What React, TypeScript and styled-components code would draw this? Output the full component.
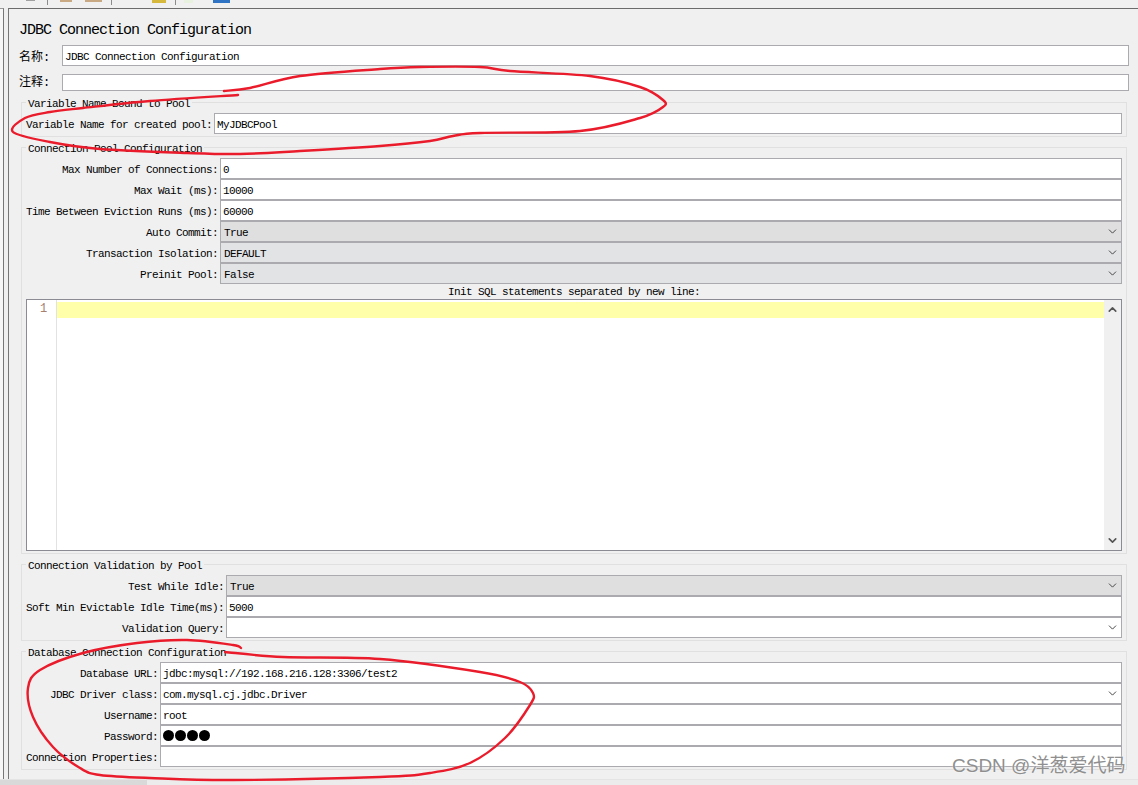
import React from 'react';
import styled, { createGlobalStyle } from 'styled-components';
import { ChevronDown, ChevronUp } from 'lucide-react';

const GlobalStyle = createGlobalStyle`
  html, body {
    margin: 0;
    padding: 0;
    background: #f0f0f0;
  }
  * {
    box-sizing: border-box;
  }
`;

const MONO = `"Liberation Mono", "Noto Sans CJK SC", monospace`;

const Page = styled.div`
  position: relative;
  width: 1138px;
  height: 785px;
  overflow: hidden;
  display: flex;
  flex-direction: column;
  background: #f0f0f0;
  font-family: ${MONO};
  font-size: 11px;
  letter-spacing: -0.6px;
  color: #000;
`;

const Toolbar = styled.div`
  height: 8px;
  flex: none;
  display: flex;
  align-items: flex-start;
  overflow: hidden;
`;

const ToolBit = styled.span<{ $left: number; $width: number; $height: number; $color: string }>`
  flex: none;
  margin-left: ${(p) => p.$left}px;
  width: ${(p) => p.$width}px;
  height: ${(p) => p.$height}px;
  background: ${(p) => p.$color};
`;

const ToolSep = styled.span<{ $left: number }>`
  flex: none;
  margin-left: ${(p) => p.$left}px;
  width: 1px;
  height: 5px;
  background: #8c8c8c;
`;

const Main = styled.div`
  flex: 1;
  min-height: 0;
  display: flex;
`;

const TreeEdge = styled.div`
  flex: none;
  width: 4px;
  border-right: 1px solid #777;
  border-top: 1px solid #9a9a9a;
  background: #f7f7f7;
`;

const Splitter = styled.div`
  flex: none;
  width: 4px;
`;

const Panel = styled.div`
  flex: 1;
  min-width: 0;
  border-left: 1px solid #777;
  border-top: 1px solid #6b6b6b;
  padding: 12px 9px 0 10px;
`;

const Title = styled.div`
  font-size: 15px;
  letter-spacing: -1px;
  line-height: 16px;
  height: 24px;
  padding-top: 2px;
`;

const NameRow = styled.div<{ $height: number; $gapBelow: number }>`
  display: flex;
  align-items: center;
  gap: 0;
  height: ${(p) => p.$height}px;
  margin-bottom: ${(p) => p.$gapBelow}px;
`;

const NameLabel = styled.span<{ $raise?: number }>`
  flex: none;
  width: 43px;
  padding-bottom: ${(p) => p.$raise || 0}px;
  font-size: 12px;
  letter-spacing: 0;
`;

const Field = styled.div<{ $tone?: 'white' | 'dark' | 'light' }>`
  flex: 1;
  min-width: 0;
  height: 100%;
  min-height: 17px;
  display: flex;
  align-items: center;
  justify-content: space-between;
  padding: 2px 2px 0 ${(p) => (p.$tone && p.$tone !== 'white' ? 3 : 2)}px;
  border: 1px solid #ababaf;
  white-space: pre;
  background: ${(p) =>
    p.$tone === 'dark' ? '#dfdfdf' : p.$tone === 'light' ? '#e2e3e5' : '#fff'};
`;

const Arrow = styled(ChevronDown)`
  flex: none;
  margin-top: -2px;
  color: #444;
  stroke-width: 1.8;
`;

const Group = styled.fieldset<{ $gapBelow: number }>`
  margin: 0 2px ${(p) => p.$gapBelow}px 2px;
  min-width: 0;
  padding: 3px 4px 2px 4px;
  border: 1px solid #e0e0e0;
`;

const GroupTitle = styled.legend`
  padding: 4px 2px 0 2px;
  line-height: 12px;
`;

const FieldGrid = styled.div`
  display: grid;
  grid-template-columns: max-content 1fr;
  grid-auto-rows: 21px;
  column-gap: 2px;
`;

const FieldLabel = styled.div`
  display: flex;
  align-items: center;
  justify-content: flex-end;
  padding-top: 2px;
  white-space: pre;
`;

const Caption = styled.div`
  height: 15px;
  padding-top: 2px;
  line-height: 13px;
  text-align: center;
`;

const Editor = styled.div`
  height: 252px;
  display: flex;
  border: 1px solid #8b8b94;
  background: #fff;
`;

const Gutter = styled.div`
  flex: none;
  width: 30px;
  padding: 2px 0 0 13px;
  border-right: 1px solid #e2e2e2;
  font-size: 12px;
  line-height: 15px;
  color: #a5806f;
`;

const CodeArea = styled.div`
  flex: 1;
  padding-top: 2px;
`;

const CurrentLine = styled.div`
  height: 16px;
  background: #ffffaa;
`;

const ScrollTrack = styled.div`
  flex: none;
  width: 17px;
  display: flex;
  flex-direction: column;
  align-items: center;
  justify-content: space-between;
  padding: 3px 0;
  background: #f0f0f0;
  color: #555;
`;

const Dots = styled.span`
  display: flex;
  gap: 1px;
  margin-top: -2px;
`;

const Dot = styled.span`
  width: 11px;
  height: 11px;
  border-radius: 50%;
  background: #000;
`;

const BottomStrip = styled.div`
  flex: none;
  height: 6px;
  display: flex;
  border-top: 1px solid #e4e4e4;
`;

const StripPart = styled.div<{ $grow?: boolean; $color: string }>`
  flex: ${(p) => (p.$grow ? 1 : 'none')};
  width: ${(p) => (p.$grow ? 'auto' : '147px')};
  background: ${(p) => p.$color};
`;

const Ink = styled.svg`
  position: absolute;
  inset: 0;
  pointer-events: none;
`;

const InkLine = styled.path`
  fill: none;
  stroke: #ea1c2c;
  stroke-width: 2.4;
  stroke-linecap: round;
  stroke-linejoin: round;
`;

const Watermark = styled.div`
  position: absolute;
  left: 952px;
  top: 754px;
  font-family: "Liberation Sans", "Noto Sans CJK SC", sans-serif;
  font-size: 19px;
  letter-spacing: 0;
  line-height: 24px;
  white-space: nowrap;
  color: #8f8f8f;
  text-shadow: 0 0 2px rgba(255, 255, 255, 0.9);
`;

type Row = {
  label: string;
  value?: string;
  tone?: 'white' | 'dark' | 'light';
  select?: boolean;
  secret?: boolean;
};

const Rows: React.FC<{ rows: Row[] }> = ({ rows }) => (
  <FieldGrid>
    {rows.map((row) => (
      <React.Fragment key={row.label}>
        <FieldLabel>{row.label}</FieldLabel>
        <Field $tone={row.tone}>
          {row.secret ? (
            <Dots>
              <Dot />
              <Dot />
              <Dot />
              <Dot />
            </Dots>
          ) : (
            <span>{row.value}</span>
          )}
          {row.select && <Arrow size={13} />}
        </Field>
      </React.Fragment>
    ))}
  </FieldGrid>
);

const poolRows: Row[] = [
  { label: 'Max Number of Connections:', value: '0' },
  { label: 'Max Wait (ms):', value: '10000' },
  { label: 'Time Between Eviction Runs (ms):', value: '60000' },
  { label: 'Auto Commit:', value: 'True', tone: 'dark', select: true },
  { label: 'Transaction Isolation:', value: 'DEFAULT', tone: 'light', select: true },
  { label: 'Preinit Pool:', value: 'False', tone: 'light', select: true },
];

const validationRows: Row[] = [
  { label: 'Test While Idle:', value: 'True', tone: 'dark', select: true },
  { label: 'Soft Min Evictable Idle Time(ms):', value: '5000' },
  { label: 'Validation Query:', select: true },
];

const databaseRows: Row[] = [
  { label: 'Database URL:', value: 'jdbc:mysql://192.168.216.128:3306/test2' },
  { label: 'JDBC Driver class:', value: 'com.mysql.cj.jdbc.Driver', select: true },
  { label: 'Username:', value: 'root' },
  { label: 'Password:', secret: true },
  { label: 'Connection Properties:' },
];

// catmull-rom through the hand drawn points
const smooth = (pts: number[][]) => {
  let d = `M${pts[0][0]} ${pts[0][1]}`;
  for (let i = 0; i < pts.length - 1; i++) {
    const p0 = pts[i - 1] || pts[i];
    const p1 = pts[i];
    const p2 = pts[i + 1];
    const p3 = pts[i + 2] || p2;
    const c1x = p1[0] + (p2[0] - p0[0]) / 6;
    const c1y = p1[1] + (p2[1] - p0[1]) / 6;
    const c2x = p2[0] - (p3[0] - p1[0]) / 6;
    const c2y = p2[1] - (p3[1] - p1[1]) / 6;
    d += ` C${c1x} ${c1y} ${c2x} ${c2y} ${p2[0]} ${p2[1]}`;
  }
  return d;
};

const topLoop = [
  [224, 91], [250, 88], [300, 76], [380, 69], [420, 67], [480, 67], [510, 71], [590, 76],
  [640, 87], [663, 100], [663, 107], [640, 118], [580, 131], [480, 133], [453, 136],
  [430, 141], [380, 146], [300, 151], [240, 154], [187, 153], [100, 149], [50, 142],
  [13, 132], [25, 118], [50, 112], [83, 108], [150, 101], [238, 95],
];

const bottomLoop = [
  [241, 648], [233, 645], [187, 640], [137, 643], [83, 653], [40, 670], [28, 688], [33, 717],
  [53, 747], [80, 768], [100, 775], [150, 778], [233, 780], [380, 777], [430, 773], [470, 763],
  [505, 738], [530, 705], [533, 693], [520, 682], [480, 672], [380, 659], [283, 657], [225, 652],
];

const App: React.FC = () => (
  <Page>
    <GlobalStyle />
    <Toolbar>
      <ToolBit $left={26} $width={9} $height={1} $color="#a0a0a0" />
      <ToolSep $left={12} />
      <ToolBit $left={12} $width={12} $height={2} $color="#c9a983" />
      <ToolBit $left={13} $width={17} $height={2} $color="#c9a983" />
      <ToolSep $left={9} />
      <ToolBit $left={40} $width={14} $height={3} $color="#d6b93c" />
      <ToolSep $left={9} />
      <ToolBit $left={8} $width={9} $height={3} $color="#e8f0e0" />
      <ToolBit $left={20} $width={17} $height={3} $color="#2f74c4" />
    </Toolbar>
    <Main>
      <TreeEdge />
      <Splitter />
      <Panel>
        <Title>JDBC Connection Configuration</Title>
        <NameRow $height={21} $gapBelow={8}>
          <NameLabel>名称:</NameLabel>
          <Field>JDBC Connection Configuration</Field>
        </NameRow>
        <NameRow $height={17} $gapBelow={3}>
          <NameLabel $raise={3}>注释:</NameLabel>
          <Field />
        </NameRow>
        <Group $gapBelow={2}>
          <GroupTitle>Variable Name Bound to Pool</GroupTitle>
          <Rows rows={[{ label: 'Variable Name for created pool:', value: 'MyJDBCPool' }]} />
        </Group>
        <Group $gapBelow={2}>
          <GroupTitle>Connection Pool Configuration</GroupTitle>
          <Rows rows={poolRows} />
          <Caption>Init SQL statements separated by new line:</Caption>
          <Editor>
            <Gutter>1</Gutter>
            <CodeArea>
              <CurrentLine />
            </CodeArea>
            <ScrollTrack>
              <ChevronUp size={13} strokeWidth={3} />
              <ChevronDown size={13} strokeWidth={3} />
            </ScrollTrack>
          </Editor>
        </Group>
        <Group $gapBelow={2}>
          <GroupTitle>Connection Validation by Pool</GroupTitle>
          <Rows rows={validationRows} />
        </Group>
        <Group $gapBelow={0}>
          <GroupTitle>Database Connection Configuration</GroupTitle>
          <Rows rows={databaseRows} />
        </Group>
      </Panel>
    </Main>
    <BottomStrip>
      <StripPart $color="#d9d9d9" />
      <StripPart $grow $color="#ececec" />
    </BottomStrip>
    <Ink width="1138" height="785" viewBox="0 0 1138 785">
      <InkLine d={smooth(topLoop)} />
      <InkLine d={smooth(bottomLoop)} />
    </Ink>
    <Watermark>CSDN @洋葱爱代码</Watermark>
  </Page>
);

export default App;
